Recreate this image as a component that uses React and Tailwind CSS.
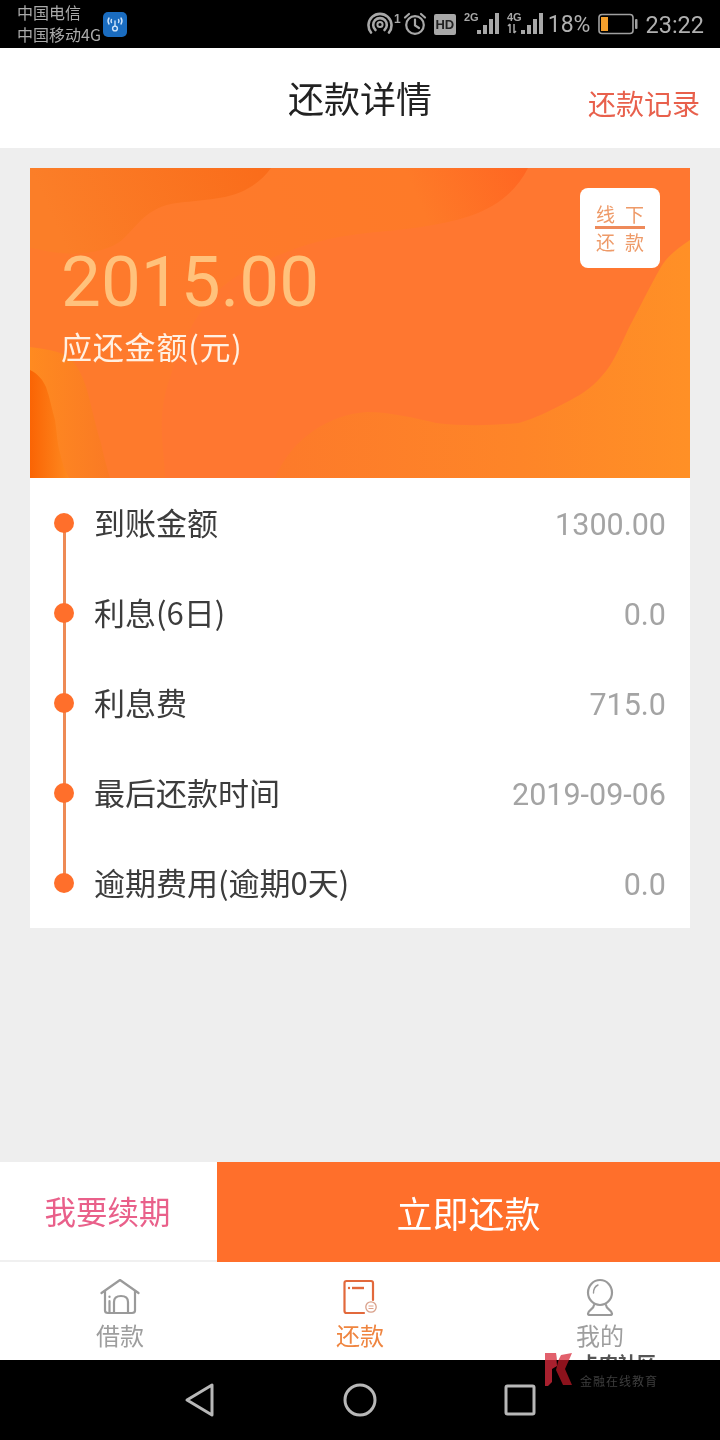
import React from "react";

const CJK = { fontFamily: '"Noto Sans CJK SC", "Noto Sans", sans-serif' };
const NUM = { fontFamily: 'Roboto, "Noto Sans CJK SC", sans-serif' };

function Hotspot() {
  return (
    <svg width="36" height="24" viewBox="0 0 36 24" className="block">
      <g fill="none" stroke="#a8a8a8" strokeWidth="2.6" strokeLinecap="round">
        <path d="M4 20.5A11.5 11.5 0 1 1 22 20.5" />
        <path d="M8.5 18A6.8 6.8 0 1 1 17.5 18" />
      </g>
      <circle cx="13" cy="12.5" r="2.6" fill="none" stroke="#a8a8a8" strokeWidth="2" />
      <text x="27" y="11" fontSize="12" fontWeight="700" fill="#a8a8a8" fontFamily="Liberation Sans, sans-serif">1</text>
    </svg>
  );
}

function Alarm() {
  return (
    <svg width="24" height="24" viewBox="0 0 24 24" className="block">
      <g fill="none" stroke="#a8a8a8" strokeWidth="2.2" strokeLinecap="round">
        <circle cx="12" cy="13" r="8.8" />
        <path d="M12 7.5V13.5L16 16" />
        <path d="M2 5.5L6 2" />
        <path d="M22 5.5L18 2" />
      </g>
    </svg>
  );
}

function Signal({ label, arrows, w }) {
  return (
    <svg width={w} height="26" viewBox={`0 0 ${w} 26`} className="block">
      <text x="0" y="10" fontSize="11" fontWeight="700" fill="#a8a8a8" fontFamily="Liberation Sans, sans-serif">{label}</text>
      {arrows && <path d="M3 13v9M1 15l2-2M7 13v9M9 20l-2 2" stroke="#a8a8a8" strokeWidth="1.5" fill="none" />}
      <g fill="#a8a8a8">
        <rect x={w - 22} y="19" width="4" height="4" />
        <rect x={w - 16} y="14" width="4" height="9" />
        <rect x={w - 10} y="8" width="4" height="15" />
        <rect x={w - 4} y="2" width="4" height="21" />
      </g>
    </svg>
  );
}

function Battery() {
  return (
    <svg width="40" height="22" viewBox="0 0 40 22" className="block">
      <rect x="1" y="1.5" width="34" height="19" rx="3" fill="none" stroke="#a0a0a0" strokeWidth="1.6" />
      <rect x="3" y="4" width="7" height="14" fill="#f5a02c" />
      <rect x="37" y="6" width="2.5" height="10" rx="1" fill="#a0a0a0" />
    </svg>
  );
}

function BannerArt() {
  return (
    <svg className="absolute inset-0 w-full h-full" viewBox="0 0 660 310" preserveAspectRatio="none">
      <defs>
        <linearGradient id="mid" gradientUnits="userSpaceOnUse" x1="150" y1="150" x2="498" y2="0">
          <stop offset="0" stopColor="#fe7a2c" />
          <stop offset="0.7" stopColor="#fe7a28" />
          <stop offset="1" stopColor="#ff6622" />
        </linearGradient>
        <linearGradient id="tl" gradientUnits="userSpaceOnUse" x1="40" y1="90" x2="241" y2="0">
          <stop offset="0" stopColor="#fb7e28" />
          <stop offset="1" stopColor="#fa6c1a" />
        </linearGradient>
        <linearGradient id="right" gradientUnits="userSpaceOnUse" x1="240" y1="0" x2="660" y2="0">
          <stop offset="0" stopColor="#fd7a2a" />
          <stop offset="0.6" stopColor="#fe8528" />
          <stop offset="1" stopColor="#ff9026" />
        </linearGradient>
        <linearGradient id="bl" gradientUnits="userSpaceOnUse" x1="0" y1="0" x2="80" y2="0">
          <stop offset="0" stopColor="#ff8a20" />
          <stop offset="1" stopColor="#fa7a24" />
        </linearGradient>
        <linearGradient id="bl2" gradientUnits="userSpaceOnUse" x1="0" y1="0" x2="40" y2="0">
          <stop offset="0" stopColor="#fa6404" />
          <stop offset="1" stopColor="#fe8a20" />
        </linearGradient>
      </defs>
      <rect width="660" height="310" fill="#ff7730" />
      <path d="M0 0H498C488 20 470 38 440 48C410 58 370 62 337 65C310 68 285 73 262 82C225 96 200 110 186 125C165 148 150 175 140 210C125 250 135 285 135 310H0Z" fill="url(#mid)" />
      <path d="M0 0H241C228 18 210 26 195 29C170 34 145 33 131 39C112 47 105 60 92 72C80 82 55 88 30 85C18 84 8 81 0 80Z" fill="url(#tl)" />
      <path d="M660 72C645 82 636 90 631 99C620 118 612 135 603 152C592 172 585 195 571 209C560 222 548 228 535 235C520 243 505 250 489 255C460 258 430 258 406 255C385 250 360 244 337 244C300 246 262 270 245 310H660Z" fill="url(#right)" />
      <path d="M0 179C14 181 30 183 39 189C48 197 54 212 57 222C62 240 66 260 71 275C74 290 77 300 80 310H0Z" fill="url(#bl)" />
      <path d="M0 202C8 206 13 212 16 219C20 230 22 242 25 252C27 265 27 275 30 285C32 295 35 303 39 310H0Z" fill="url(#bl2)" />
    </svg>
  );
}

function Row({ label, value }) {
  return (
    <div className="relative flex items-center justify-between h-[90px] pl-6 pr-6">
      <div className="flex items-center gap-5">
        <div className="w-5 h-5 rounded-full bg-[#ff6f2b]" />
        <span className="text-[31px] text-[#3c3c3c] -mt-[1px]" style={CJK}>{label}</span>
      </div>
      <span className="text-[30.5px] text-[#a4a4a4] pt-[4px]" style={NUM}>{value}</span>
    </div>
  );
}

function HomeIcon() {
  return (
    <svg width="40" height="40" viewBox="0 0 40 40" className="block">
      <g fill="none" stroke="#9a9a9a" strokeWidth="2.2" strokeLinecap="round" strokeLinejoin="round">
        <path d="M1.5 15L20 2L38.5 15" />
        <path d="M5 13V32.5Q5 35 8 35H32Q35 35 35 32.5V13" />
        <path d="M9.5 23V34" />
        <path d="M9.5 18.5V19" />
        <path d="M14 34V24Q14 18 21 18Q28 18 28 24V34" />
      </g>
    </svg>
  );
}

function RepayIcon() {
  return (
    <svg width="40" height="40" viewBox="0 0 40 40" className="block">
      <path d="M33 22V5Q33 3 31 3H6.5Q4.5 3 4.5 5V33Q4.5 35 6.5 35H24" fill="none" stroke="#e2693c" strokeWidth="2.2" strokeLinecap="round" />
      <path d="M12 10H24" stroke="#e2693c" strokeWidth="2.4" />
      <circle cx="9" cy="10" r="1.2" fill="#e2693c" />
      <circle cx="31" cy="29" r="5.2" fill="#fff" stroke="#d9a08a" strokeWidth="1.3" />
      <path d="M28.5 28H33.5M28.5 30.5H33.5" stroke="#e0a088" strokeWidth="1" />
    </svg>
  );
}

function MeIcon() {
  return (
    <svg width="40" height="40" viewBox="0 0 40 40" className="block">
      <g fill="none" stroke="#9a9a9a" strokeWidth="2.2" strokeLinecap="round" strokeLinejoin="round">
        <ellipse cx="20" cy="14.5" rx="12" ry="12.5" />
        <path d="M13.5 15Q13.5 9 18 7" strokeWidth="1.4" />
        <path d="M14 27C14 31 8 32 8 35.5Q8 37 10 37H30Q32 37 32 35.5C32 32 26 31 26 27" />
      </g>
    </svg>
  );
}

function Tab({ icon, label, active }) {
  return (
    <div className="flex flex-col items-center w-[240px]">
      <div className="mt-[16px]">{icon}</div>
      <span className={`text-[24px] leading-[30px] mt-[2px] ${active ? "text-[#ef8540]" : "text-[#9e9e9e]"}`} style={CJK}>{label}</span>
    </div>
  );
}

function Watermark() {
  return (
    <div className="absolute left-[544px] top-[1353px] flex gap-[6px] pointer-events-none">
      <svg width="30" height="33" viewBox="0 0 30 33" className="block">
        <path d="M1 0H12L13 13L8 16V29L4 33H1Z" fill="#a8202e" />
        <path d="M1 0H12L12.5 7H1Z" fill="#e2606c" />
        <path d="M17 2L28 0L25 7H14.5Z" fill="#e2606c" />
        <path d="M14.5 7H25L21 16L28 32H19L12 17Z" fill="#8c121c" />
      </svg>
      <div className="flex flex-col">
        <span className="text-[19px] leading-[19px] font-bold text-[#555] mix-blend-multiply" style={CJK}>卡农社区</span>
        <span className="text-[12px] leading-[14px] mt-[2px] tracking-[1px] text-[#3e3e3e]" style={CJK}>金融在线教育</span>
      </div>
    </div>
  );
}

export default function App() {
  return (
    <div className="relative w-[720px] h-[1440px] flex flex-col bg-[#eeeeee] overflow-hidden" style={CJK}>
      {/* status bar */}
      <div className="h-[48px] bg-black flex items-center justify-between pl-[17px] pr-[16px] shrink-0">
        <div className="flex items-center">
          <div className="flex flex-col -mt-[2px] text-[16px] leading-[22px] text-[#ababab] w-[86px] whitespace-nowrap">
            <span>中国电信</span>
            <span>中国移动4G</span>
          </div>
          <div className="w-[24px] h-[25px] rounded-[5px] bg-[#1a6cc0] flex items-center justify-center">
            <svg width="18" height="18" viewBox="0 0 18 18">
              <g fill="none" stroke="#cfe4fa" strokeWidth="1.4" strokeLinecap="round">
                <path d="M3 3Q1 6 3 9" />
                <path d="M15 3Q17 6 15 9" />
                <path d="M5.5 4.5Q4.5 6 5.5 7.5" />
                <path d="M12.5 4.5Q13.5 6 12.5 7.5" />
                <path d="M9 6V11" />
                <circle cx="9" cy="13.5" r="2.4" />
              </g>
            </svg>
          </div>
        </div>
        <div className="flex items-center text-[#b0b0b0]" style={NUM}>
          <Hotspot />
          <Alarm />
          <div className="ml-[7px] w-[22px] h-[21px] rounded-[2px] bg-[#a8a8a8] text-[#222] text-[13px] font-bold leading-[21px] text-center" style={{ fontFamily: '"Liberation Sans", sans-serif' }}>HD</div>
          <div className="ml-[8px]"><Signal label="2G" w={35} /></div>
          <div className="ml-[8px]"><Signal label="4G" arrows w={36} /></div>
          <span className="ml-[5px] text-[23px] leading-[30px] pt-[1px]">18%</span>
          <div className="ml-[8px]"><Battery /></div>
          <span className="ml-[7px] text-[23.5px] leading-[30px] pt-[1px]">23:22</span>
        </div>
      </div>

      {/* header */}
      <div className="relative h-[100px] bg-white flex items-center justify-center shrink-0">
        <span className="text-[36px] text-[#222222] -mt-[2px]">还款详情</span>
        <span className="absolute right-[20px] top-[35px] text-[28px] leading-[40px] text-[#e8604c]">还款记录</span>
      </div>

      {/* content */}
      <div className="flex-1 px-[30px] pt-[20px]">
        <div className="relative h-[310px] overflow-hidden flex justify-between pl-[31px] pr-[30px]">
          <BannerArt />
          <div className="relative flex flex-col pt-[79px]">
            <span className="text-[71px] leading-[70px] text-[#ffc27c]" style={NUM}>2015.00</span>
            <span className="mt-[9px] -ml-[1px] text-[31px] leading-[40px] tracking-[0.8px] text-[#fff0e2] pl-[1px]">应还金额(元)</span>
          </div>
          <div className="relative mt-[20px] w-[80px] h-[80px] rounded-[8px] bg-white flex flex-col items-center justify-center text-[19px] leading-[23px] text-[#ee9a68]">
            <div className="flex justify-between w-[48px] -mt-[2px]"><span>线</span><span>下</span></div>
            <div className="w-[50px] h-[3px] bg-[#ee8a5a] my-[1px]" />
            <div className="flex justify-between w-[48px]"><span>还</span><span>款</span></div>
          </div>
        </div>
        <div className="relative bg-white">
          <div className="absolute left-[33px] top-[45px] bottom-[45px] w-[2.5px] bg-[#ee8a55]" />
          <Row label="到账金额" value="1300.00" />
          <Row label="利息(6日)" value="0.0" />
          <Row label="利息费" value="715.0" />
          <Row label="最后还款时间" value="2019-09-06" />
          <Row label="逾期费用(逾期0天)" value="0.0" />
        </div>
      </div>

      {/* action buttons */}
      <div className="flex h-[100px] shrink-0">
        <div className="w-[217px] bg-white border-b-2 border-[#f0f0f0] flex items-center justify-center text-[31.5px] text-[#e9608a] pr-[2px]">我要续期</div>
        <div className="flex-1 bg-[#ff6f2b] flex items-center justify-center text-[36px] text-white">立即还款</div>
      </div>

      {/* tabs */}
      <div className="flex h-[98px] bg-white shrink-0">
        <Tab icon={<HomeIcon />} label="借款" />
        <Tab icon={<RepayIcon />} label="还款" active />
        <Tab icon={<MeIcon />} label="我的" />
      </div>

      {/* system nav */}
      <div className="h-[80px] bg-black flex items-center justify-center shrink-0">
        <div className="w-[160px] flex justify-center">
          <svg width="32" height="36" viewBox="0 0 32 36"><path d="M28 3V33L3 18Z" fill="none" stroke="#b8b8b8" strokeWidth="3" strokeLinejoin="round" /></svg>
        </div>
        <div className="w-[160px] flex justify-center">
          <svg width="34" height="34" viewBox="0 0 34 34"><circle cx="17" cy="17" r="15" fill="none" stroke="#b8b8b8" strokeWidth="3" /></svg>
        </div>
        <div className="w-[160px] flex justify-center">
          <svg width="32" height="32" viewBox="0 0 32 32"><rect x="2" y="2" width="28" height="28" rx="1.5" fill="none" stroke="#b8b8b8" strokeWidth="3" /></svg>
        </div>
      </div>
      <Watermark />
    </div>
  );
}
